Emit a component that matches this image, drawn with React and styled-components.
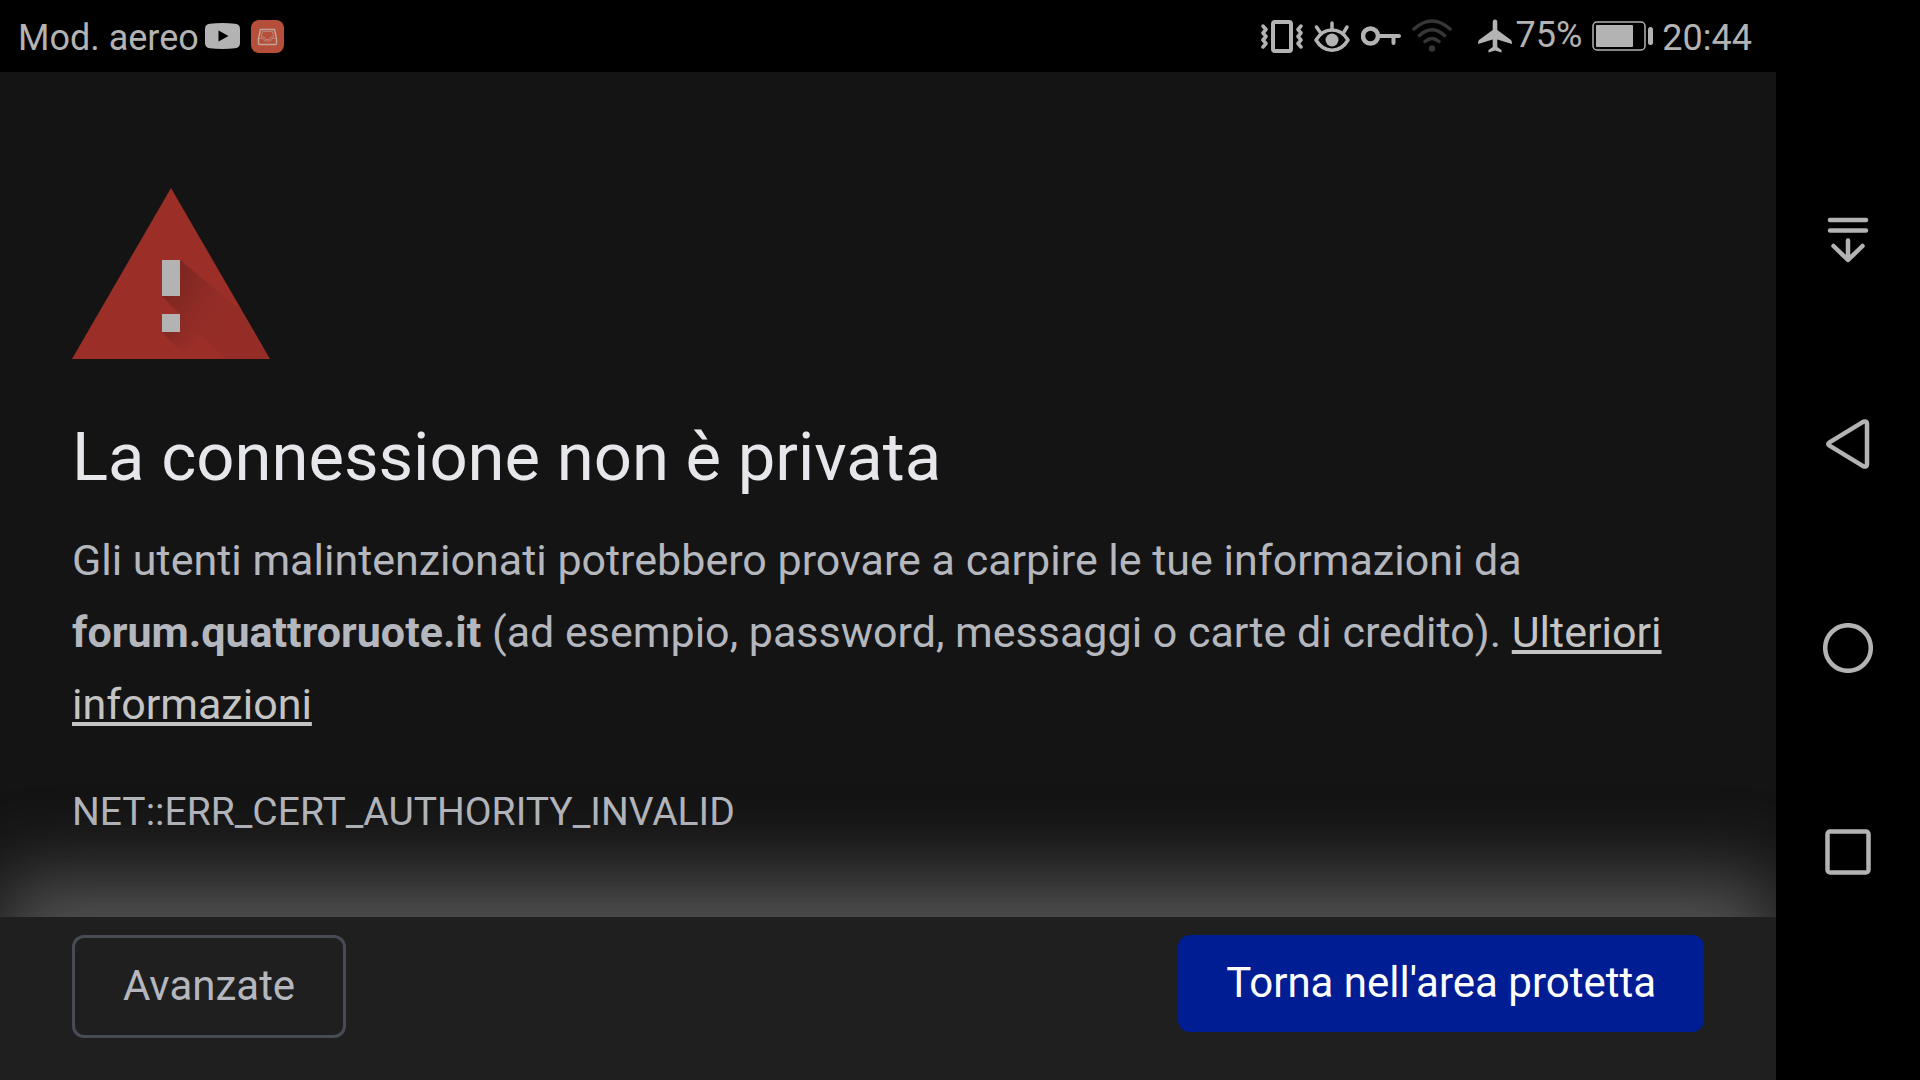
import React from "react";
import styled, { createGlobalStyle } from "styled-components";

const GlobalStyle = createGlobalStyle`
  * {
    box-sizing: border-box;
  }
  body {
    margin: 0;
    background: #000;
    font-family: Roboto, "Liberation Sans", sans-serif;
  }
  button {
    font-family: inherit;
    cursor: pointer;
  }
`;

const VibrateIcon = () => (
  <svg width="42" height="34" viewBox="0 0 42 34" fill="none" stroke="#b3b3b3" strokeWidth="4" strokeLinecap="round" strokeLinejoin="round">
    <rect x="12" y="3" width="18" height="29" rx="2" />
    <path d="M2 7l3 3.500-3 3.500 3 3.500-3 3.500 3 3.500-3 3.500" strokeWidth="3.500" />
    <path d="M40 7l-3 3.500 3 3.500-3 3.500 3 3.500-3 3.500 3 3.500" strokeWidth="3.500" />
  </svg>
);

const EyeIcon = () => (
  <svg width="36" height="34" viewBox="0 0 36 34" fill="none" stroke="#b3b3b3" strokeWidth="3.500" strokeLinecap="round">
    <path d="M2 21C10 7.500 26 7.500 34 21C26 34.500 10 34.500 2 21z" strokeLinejoin="round" />
    <circle cx="18" cy="21" r="6.500" fill="#b3b3b3" stroke="none" />
    <path d="M18 10V4M6 13L2.500 8M30 13l3-5" />
  </svg>
);

const KeyIcon = () => (
  <svg width="40" height="20" viewBox="0 0 40 20" fill="none" stroke="#b3b3b3" strokeWidth="4" strokeLinecap="round">
    <circle cx="9.500" cy="10" r="7.500" strokeWidth="4.500" />
    <path d="M18 10h20M32.500 10v7" />
  </svg>
);

const WifiIcon = () => (
  <svg width="40" height="34" viewBox="0 0 40 34" fill="none" stroke="#363636" strokeWidth="3.500" strokeLinecap="round">
    <path d="M2 10Q20-6 38 10M7.500 16.500Q20 5 32.500 16.500M13 22.500q7-6 14 0" />
    <circle cx="20" cy="29.500" r="3.200" fill="#363636" stroke="none" />
  </svg>
);

const PlaneIcon = () => (
  <svg width="34" height="34" viewBox="0 0 34 34" fill="#b3b3b3">
    <path d="M17 0.500q2.300 0 2.300 3v7.500L33 21q1 1 1 4L19.300 20.500v7.500l4.200 3v2.500L17 31.500l-6.500 2V31l4.200-3v-7.500L0 25q0-3 1-4l13.700-10V3.500q0-3 2.300-3z" />
  </svg>
);

const BatteryIcon = () => (
  <svg width="62" height="30" viewBox="0 0 62 30" fill="#b3b3b3">
    <rect x="1" y="1" width="52" height="28" rx="4" fill="none" stroke="#b3b3b3" strokeWidth="1.500" />
    <rect x="4" y="4" width="37" height="22" rx="1" />
    <rect x="56" y="6" width="5" height="18" rx="2.500" />
  </svg>
);

const YoutubeIcon = () => (
  <svg width="35" height="26" viewBox="0 0 35 26">
    <path d="M5 0.700Q17.500-0.500 30 0.700Q35 1 35 6v14q0 5-5 5.300Q17.500 26.500 5 25.300Q0 25 0 20V6Q0 1 5 0.700z" fill="#b3b3b3" />
    <path d="M13.500 7.500v11l10-5.500z" fill="#000" />
  </svg>
);

const InboxIcon = () => (
  <svg width="33" height="33" viewBox="0 0 33 33" fill="none" stroke="#c3a59c" strokeWidth="1.400" strokeLinejoin="round">
    <rect width="33" height="33" rx="8" fill="#b54f3a" stroke="none" />
    <path d="M9.500 9.500h14l2 9v5q0 1-1 1h-16q-1 0-1-1v-5z" />
    <path d="M7.500 18.500h4.500l2 2.500h5.500l1.500-2.500h4.500M11.500 11.500h10l1.200 5.500h-2.700l-1.500 2.500h-4l-1.500-2.500h-2.700z" strokeWidth="1" strokeOpacity="0.6" />
  </svg>
);

const WarningIcon = () => (
  <svg width="198" height="171" viewBox="0 0 198 171">
    <defs>
      <linearGradient id="longShadow" gradientUnits="userSpaceOnUse" x1="98" y1="92" x2="160" y2="130">
        <stop offset="0" stopColor="#000" stopOpacity="0.2" />
        <stop offset="0.600" stopColor="#000" stopOpacity="0.060" />
        <stop offset="1" stopColor="#000" stopOpacity="0.040" />
      </linearGradient>
      <linearGradient id="dotShadow" gradientUnits="userSpaceOnUse" x1="99" y1="137" x2="125" y2="156">
        <stop offset="0" stopColor="#000" stopOpacity="0.14" />
        <stop offset="1" stopColor="#000" stopOpacity="0" />
      </linearGradient>
    </defs>
    <path d="M99 0l99 171H0z" fill="#9b2f28" />
    <path d="M108 72l62 51 28 48H153L90 108z" fill="url(#longShadow)" />
    <path d="M108 126l45 45h-37L90 144z" fill="url(#dotShadow)" />
    <path d="M90 72h18v36H90zM90 126h18v18H90z" fill="#b3b3b3" />
  </svg>
);

const StatusBar = () => (
  <Status>
    <StatusGroup $gap={11}>
      <StatusGroup $gap={6}>
        <StatusText>Mod. aereo</StatusText>
        <YoutubeIcon />
      </StatusGroup>
      <InboxIcon />
    </StatusGroup>
    <StatusGroup $gap={8}>
      <StatusGroup $gap={11}>
        <VibrateIcon />
        <EyeIcon />
        <KeyIcon />
        <WifiIcon />
      </StatusGroup>
      <Power>
        <PlaneIcon />
        <BatteryText>75%</BatteryText>
        <BatteryIcon />
      </Power>
      <StatusText>20:44</StatusText>
    </StatusGroup>
  </Status>
);

const SystemNav = () => (
  <Nav aria-label="Navigazione">
    <NavButton aria-label="Notifiche">
      <svg width="50" height="50" viewBox="0 0 50 50">
        <path d="M7 5h36M7 15.500h36M25 25.500v19M10.500 31L25 45l14.500-14" />
      </svg>
    </NavButton>
    <NavButton aria-label="Indietro">
      <svg width="50" height="50" viewBox="0 0 50 50">
        <path d="M6.500 23.300L40.500 2.700q3.500-1 3.500 2v40.600q0 3-3.500 2L6.500 26.700q-2.500-1.700 0-3.400z" />
      </svg>
    </NavButton>
    <NavButton aria-label="Home">
      <svg width="50" height="50" viewBox="0 0 50 50">
        <circle cx="25" cy="25" r="22.800" />
      </svg>
    </NavButton>
    <NavButton aria-label="Recenti">
      <svg width="50" height="50" viewBox="0 0 50 50">
        <rect x="4.500" y="4.500" width="41" height="41" rx="2.500" />
      </svg>
    </NavButton>
  </Nav>
);

const App = () => {
  return (
    <>
      <GlobalStyle />
      <Device>
        <Screen>
          <StatusBar />
          <Page>
            <WarningIcon />
            <Title>La connessione non è privata</Title>
            <Message>
              Gli utenti malintenzionati potrebbero provare a carpire le tue
              informazioni da <strong>forum.quattroruote.it</strong> (ad
              esempio, password, messaggi o carte di credito).{" "}
              <a href="#info">Ulteriori informazioni</a>
            </Message>
            <ErrorCode>NET::ERR_CERT_AUTHORITY_INVALID</ErrorCode>
          </Page>
          <Actions>
            <DetailsButton>Avanzate</DetailsButton>
            <SafetyButton>Torna nell'area protetta</SafetyButton>
          </Actions>
        </Screen>
        <SystemNav />
      </Device>
    </>
  );
};

const Device = styled.div`
  display: flex;
  min-height: 100vh;
`;

const Screen = styled.div`
  flex: 1;
  min-width: 0;
  display: flex;
  flex-direction: column;
  overflow: hidden;
  background: #141414;
`;

const Status = styled.header`
  display: flex;
  justify-content: space-between;
  align-items: center;
  height: 72px;
  padding: 0 24px 0 18px;
  background: #000;
`;

const StatusGroup = styled.div`
  display: flex;
  align-items: center;
  gap: ${(props) => props.$gap}px;
`;

const Power = styled.div`
  display: flex;
  align-items: center;
  gap: 4px;
  margin-left: 18px;
`;

const StatusText = styled.span`
  font-size: 36px;
  line-height: 42px;
  padding-top: 4px;
  color: #b3b3b3;
`;

const BatteryText = styled(StatusText)`
  padding: 0 6px 2px 0;
`;

const Page = styled.main`
  flex: 1;
  padding: 116px 72px 0;

  > svg {
    display: block;
  }
`;

const Title = styled.h1`
  margin: 58px 0 27px;
  font-size: 67px;
  font-weight: 400;
  line-height: 80px;
  color: #e6e7eb;
`;

const Message = styled.p`
  margin: 0 0 36px;
  font-size: 43px;
  line-height: 72px;
  color: #b4b7bd;

  a {
    color: #c4c4c4;
  }
`;

const ErrorCode = styled.div`
  font-size: 39px;
  line-height: 72px;
  color: #b4b7bd;
`;

const Actions = styled.footer`
  display: flex;
  justify-content: space-between;
  align-items: flex-start;
  padding: 18px 72px 42px;
  background: #1f1f1f;
  box-shadow: 0 -38px 78px #545454;
`;

const DetailsButton = styled.button`
  height: 103px;
  padding: 0 48px 2px;
  border: 3px solid #464b54;
  border-radius: 12px;
  background: transparent;
  font-size: 42px;
  color: #b4b7bd;
`;

const SafetyButton = styled.button`
  height: 97px;
  padding: 0 48px 2px;
  border: none;
  border-radius: 12px;
  background: #001d93;
  font-size: 42px;
  color: #fff;
`;

const Nav = styled.nav`
  display: flex;
  flex-direction: column;
  flex-shrink: 0;
  width: 144px;
  padding: 138px 0 126px;
  background: #000;
`;

const NavButton = styled.button`
  flex: 1;
  display: flex;
  align-items: center;
  justify-content: center;
  border: none;
  background: none;

  svg {
    fill: none;
    stroke: #b3b3b3;
    stroke-width: 4.5;
    stroke-linecap: round;
    stroke-linejoin: round;
  }
`;

export default App;
